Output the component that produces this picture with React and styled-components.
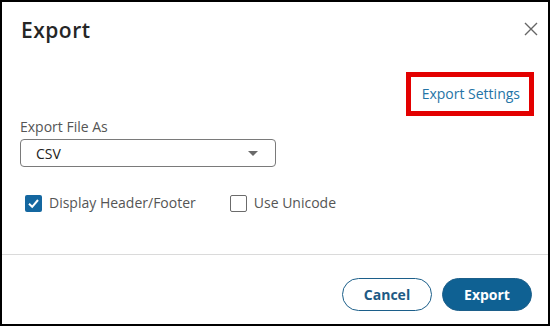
import React from 'react'
import styled, { createGlobalStyle } from 'styled-components'

const GlobalStyle = createGlobalStyle`
    html, body {
        margin: 0;
        padding: 0;
        background: #fff;
    }
    body {
        font-family: "Open Sans", "Noto Sans", sans-serif;
    }
`

const App = () => {
    return (
        <>
            <GlobalStyle />
            <Dialog>
                <Header>
                    <Title>Export</Title>
                    <CloseButton aria-label="Close">
                        <svg width="14" height="14" viewBox="0 0 14 14">
                            <path d="M1 1 L13 13 M13 1 L1 13" stroke="#666" strokeWidth="1.4" fill="none" />
                        </svg>
                    </CloseButton>
                </Header>
                <Body>
                    <LinkRow>
                        <Highlight>
                            <SettingsLink href="#">Export Settings</SettingsLink>
                        </Highlight>
                    </LinkRow>
                    <Label>Export File As</Label>
                    <Select>
                        <span>CSV</span>
                        <Caret />
                    </Select>
                    <Options>
                        <Option>
                            <Box checked>
                                <svg width="13" height="13" viewBox="0 0 13 13">
                                    <path d="M2 6.8 L5.2 9.8 L11 3" stroke="#fff" strokeWidth="2" fill="none" />
                                </svg>
                            </Box>
                            Display Header/Footer
                        </Option>
                        <Option>
                            <Box />
                            Use Unicode
                        </Option>
                    </Options>
                </Body>
                <Footer>
                    <Button>Cancel</Button>
                    <Button primary>Export</Button>
                </Footer>
            </Dialog>
        </>
    )
}

export default App

const Dialog = styled.div`
    box-sizing: border-box;
    width: 550px;
    height: 326px;
    border: 2px solid #000;
    background: #fff;
    display: flex;
    flex-direction: column;
`

const Header = styled.div`
    display: flex;
    justify-content: space-between;
    align-items: flex-start;
    padding: 15px 10px 0 19px;
`

const Title = styled.h2`
    margin: 0;
    font-family: "Open Sans", sans-serif;
    font-size: 21px;
    line-height: 26px;
    font-weight: 600;
    color: #262626;
    letter-spacing: 0.5px;
`

const CloseButton = styled.button`
    border: none;
    background: none;
    padding: 0;
    margin-top: 5px;
    width: 14px;
    height: 14px;
    display: flex;
    cursor: pointer;
`

const Body = styled.div`
    display: flex;
    flex-direction: column;
    align-items: flex-start;
    padding: 0 14px 0 18px;
`

const LinkRow = styled.div`
    align-self: stretch;
    display: flex;
    justify-content: flex-end;
    margin-top: 29px;
`

const Highlight = styled.div`
    border: 5px solid #e30000;
    padding: 6px 9px 7px 11px;
    line-height: 20px;
`

const SettingsLink = styled.a`
    font-size: 14px;
    color: #2474a6;
    text-decoration: none;
`

const Label = styled.div`
    font-size: 14px;
    line-height: 20px;
    color: #555;
    margin-top: 1px;
`

const Select = styled.div`
    box-sizing: border-box;
    width: 256px;
    height: 28px;
    margin-top: 2px;
    border: 1px solid #7a7a7a;
    border-radius: 4px;
    display: flex;
    align-items: center;
    justify-content: space-between;
    padding: 0 17px 0 15px;
    font-size: 14px;
    color: #222;
`

const Caret = styled.span`
    width: 0;
    height: 0;
    border-left: 5px solid transparent;
    border-right: 5px solid transparent;
    border-top: 5px solid #6a6a6a;
`

const Options = styled.div`
    display: flex;
    gap: 34px;
    margin-top: 26px;
    padding-left: 5px;
`

const Option = styled.label`
    display: flex;
    align-items: center;
    gap: 7px;
    font-size: 14px;
    line-height: 20px;
    color: #555;
`

const Box = styled.span`
    box-sizing: border-box;
    width: 17px;
    height: 17px;
    border-radius: 2px;
    border: ${p => (p.checked ? 'none' : '1.5px solid #6b6b6b')};
    background: ${p => (p.checked ? '#1467a0' : '#fff')};
    display: flex;
    align-items: center;
    justify-content: center;
`

const Footer = styled.div`
    margin-top: auto;
    border-top: 1px solid #dadada;
    display: flex;
    justify-content: flex-end;
    gap: 10px;
    padding: 23px 16px 13px;
`

const Button = styled.button`
    box-sizing: border-box;
    width: 90px;
    height: 33px;
    border-radius: 17px;
    font-family: "Open Sans", sans-serif;
    font-size: 14px;
    font-weight: 700;
    cursor: pointer;
    border: 1px solid #1c5f8a;
    background: ${p => (p.primary ? '#0f6193' : '#fff')};
    color: ${p => (p.primary ? '#fff' : '#1d5a84')};
`
